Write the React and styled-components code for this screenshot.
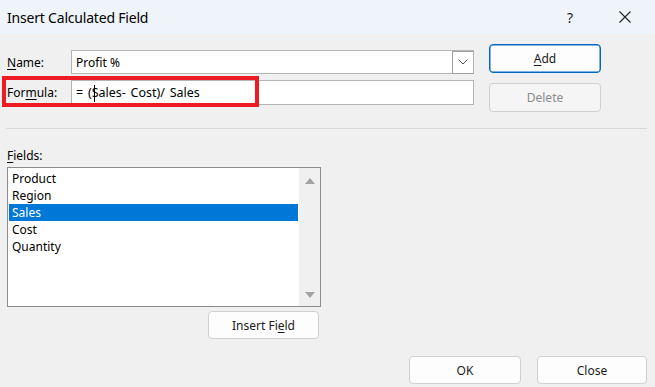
import React from 'react';
import styled, { createGlobalStyle } from 'styled-components';

const GlobalStyle = createGlobalStyle`
  html, body {
    margin: 0;
    padding: 0;
    background: #f0f0f0;
  }
  body {
    font-family: "Noto Sans", "Open Sans", sans-serif;
    font-size: 12px;
    color: #000;
  }
`;

const Dialog = styled.div`
  position: relative;
  width: 655px;
  height: 387px;
  background: #f0f0f0;
  overflow: hidden;
`;

const TitleBar = styled.div`
  height: 34px;
  background: #eff3fa;
  display: flex;
  align-items: center;
  padding-left: 7px;
`;

const Title = styled.div`
  flex: 1;
  font-size: 14px;
  letter-spacing: -0.2px;
`;

const TitleButton = styled.div`
  width: ${p => p.$w}px;
  display: flex;
  justify-content: center;
  align-items: center;
  font-size: 14px;
  color: #222;
`;

const Body = styled.div`
  padding: 10px 0 0 7px;
`;

const TopSection = styled.div`
  display: flex;
  gap: 15px;
`;

const FormColumn = styled.div`
  width: 467px;
  display: flex;
  flex-direction: column;
  gap: 6px;
  padding-top: 6px;
`;

const FormRow = styled.div`
  display: flex;
  align-items: center;
  height: ${p => p.$h}px;
`;

const Label = styled.div`
  width: 64px;
  font-size: 12px;
`;

const Key = styled.span`
  text-decoration: underline;
  text-underline-offset: 2px;
`;

const Combo = styled.div`
  flex: 1;
  height: 24px;
  box-sizing: border-box;
  border: 1px solid #b4b4b4;
  background: #fff;
  display: flex;
  align-items: center;
`;

const FieldText = styled.div`
  flex: 1;
  padding-left: 4px;
  font-size: ${p => p.$size || 12}px;
  word-spacing: ${p => p.$spacing || 0}px;
  position: relative;
`;

const DropButton = styled.div`
  width: 21px;
  height: 23px;
  box-sizing: border-box;
  border: 1px solid #a0a0a0;
  border-right: none;
  display: flex;
  align-items: center;
  justify-content: center;
  background: #fff;
`;

const TextBox = styled.div`
  flex: 1;
  height: 25px;
  box-sizing: border-box;
  border: 1px solid #b4b4b4;
  background: #fff;
  display: flex;
  align-items: center;
`;

const Caret = styled.span`
  position: absolute;
  left: 22px;
  top: 1px;
  width: 1px;
  height: 17px;
  background: #000;
`;

const ButtonColumn = styled.div`
  display: flex;
  flex-direction: column;
  gap: 10px;
`;

const Button = styled.div`
  width: ${p => p.$w || 112}px;
  height: ${p => p.$h || 29}px;
  box-sizing: border-box;
  border: 1px solid ${p => (p.$primary ? '#0067c0' : '#d0d0d0')};
  box-shadow: ${p => (p.$primary ? 'inset 0 0 0 0.5px #0067c0' : 'none')};
  border-radius: 4px;
  background: ${p => (p.$disabled ? '#f5f5f5' : '#fdfdfd')};
  color: ${p => (p.$disabled ? '#8a8a8a' : '#1a1a1a')};
  display: flex;
  align-items: center;
  justify-content: center;
  font-size: 12px;
`;

const Separator = styled.div`
  margin: 16px 8px 0 -1px;
  height: 1px;
  background: #d8d8d8;
`;

const FieldsLabel = styled.div`
  margin-top: 18px;
  font-size: 12px;
  height: 17px;
`;

const ListBox = styled.div`
  margin-top: 3px;
  width: 314px;
  height: 140px;
  box-sizing: border-box;
  border: 1px solid #8c8c8c;
  background: #fff;
  display: flex;
`;

const ListItems = styled.div`
  flex: 1;
  padding: 2px 0 0 1px;
`;

const ListItem = styled.div`
  height: 17px;
  line-height: 17px;
  padding-left: 3px;
  font-size: 12px;
  background: ${p => (p.$selected ? '#0078d7' : 'transparent')};
  color: ${p => (p.$selected ? '#fff' : '#000')};
`;

const ScrollBar = styled.div`
  width: 21px;
  margin-left: 1px;
  background: #f0f0f0;
  display: flex;
  flex-direction: column;
  justify-content: space-between;
  align-items: center;
  padding: 10px 0 8px;
  box-sizing: border-box;
`;

const InsertRow = styled.div`
  margin-top: 4px;
  padding-left: 201px;
`;

const FooterRow = styled.div`
  display: flex;
  justify-content: flex-end;
  gap: 16px;
  margin-top: 17px;
  padding-right: 8px;
`;

const RedBox = styled.div`
  position: absolute;
  left: 2px;
  top: 76px;
  width: 257px;
  height: 31px;
  box-sizing: border-box;
  border: 4px solid #ed1c24;
  pointer-events: none;
`;

const fields = ['Product', 'Region', 'Sales', 'Cost', 'Quantity'];

const Triangle = ({ up }) => (
  <svg width="10" height="6" viewBox="0 0 10 6">
    <polygon points={up ? '0,6 5,0 10,6' : '0,0 10,0 5,6'} fill="#a3a3a3" />
  </svg>
);

const App = () => (
  <Dialog>
    <GlobalStyle />
    <TitleBar>
      <Title>Insert Calculated Field</Title>
      <TitleButton $w={50}>?</TitleButton>
      <TitleButton $w={60}>
        <svg width="12" height="12" viewBox="0 0 12 12">
          <path d="M0.5 0.5 L11.5 11.5 M11.5 0.5 L0.5 11.5" stroke="#222" strokeWidth="1.1" />
        </svg>
      </TitleButton>
    </TitleBar>
    <Body>
      <TopSection>
        <FormColumn>
          <FormRow $h={24}>
            <Label><Key>N</Key>ame:</Label>
            <Combo>
              <FieldText>Profit %</FieldText>
              <DropButton>
                <svg width="10" height="6" viewBox="0 0 10 6">
                  <path d="M0.5 0.5 L5 5 L9.5 0.5" fill="none" stroke="#555" strokeWidth="1" />
                </svg>
              </DropButton>
            </Combo>
          </FormRow>
          <FormRow $h={25}>
            <Label>For<Key>m</Key>ula:</Label>
            <TextBox>
              <FieldText $size={12.5} $spacing={1.5}>
                = (Sales- Cost)/ Sales
                <Caret />
              </FieldText>
            </TextBox>
          </FormRow>
        </FormColumn>
        <ButtonColumn>
          <Button $primary><span><Key>A</Key>dd</span></Button>
          <Button $disabled>Delete</Button>
        </ButtonColumn>
      </TopSection>
      <Separator />
      <FieldsLabel><Key>F</Key>ields:</FieldsLabel>
      <ListBox>
        <ListItems>
          {fields.map(f => (
            <ListItem key={f} $selected={f === 'Sales'}>{f}</ListItem>
          ))}
        </ListItems>
        <ScrollBar>
          <Triangle up />
          <Triangle />
        </ScrollBar>
      </ListBox>
      <InsertRow>
        <Button $w={111} $h={28}><span>Insert Fi<Key>e</Key>ld</span></Button>
      </InsertRow>
      <FooterRow>
        <Button $w={112} $h={28}>OK</Button>
        <Button $w={110} $h={28}>Close</Button>
      </FooterRow>
    </Body>
    <RedBox />
  </Dialog>
);

export default App;
